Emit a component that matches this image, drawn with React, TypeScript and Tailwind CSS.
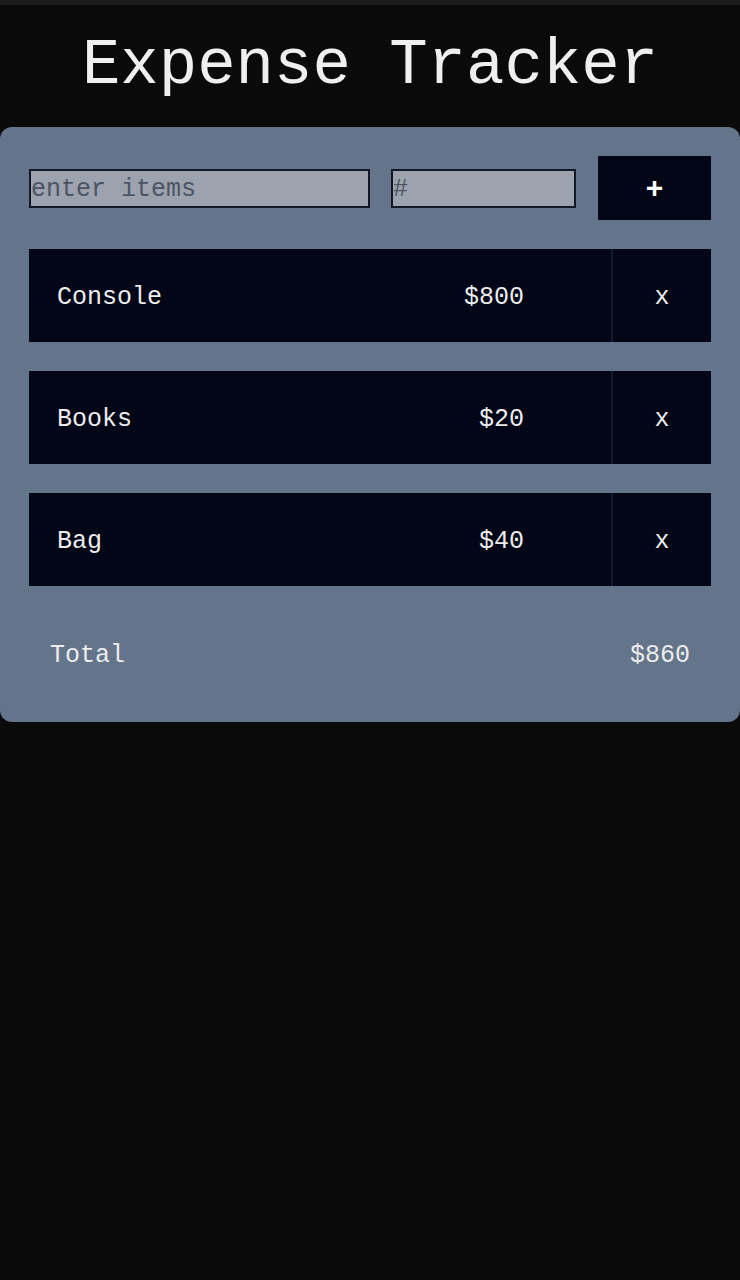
import React from 'react';

type Expense = { id: number; name: string; amount: number };

const items: Expense[] = [
  { id: 1, name: 'Console', amount: 800 },
  { id: 2, name: 'Books', amount: 20 },
  { id: 3, name: 'Bag', amount: 40 },
];

const mono = { fontFamily: '"Liberation Mono", "DejaVu Sans Mono", monospace' };

export default function App() {
  const total = items.reduce((sum, i) => sum + i.amount, 0);

  return (
    <div className="min-h-[1280px] w-full bg-[#0a0a0a] text-[#ececec]" style={mono}>
      <div className="h-[5px] bg-[#1c1c1c]" />
      <div className="flex h-[122px] items-center justify-center">
        <h1 className="text-[64px] leading-none text-[#efefef]">Expense Tracker</h1>
      </div>

      <div className="rounded-[12px] bg-[#64748b] px-[29px] pt-[29px]">
        <div className="flex items-center">
          <input
            placeholder="enter items"
            className="h-[39px] w-[341px] border-2 border-[#111827] bg-[#9ca3af] px-0 pt-[2px] text-[25px] text-[#1f2937] placeholder:text-[#4b5563] outline-none"
            style={mono}
          />
          <input
            placeholder="#"
            className="ml-[21px] h-[39px] w-[185px] border-2 border-[#111827] bg-[#9ca3af] px-0 pt-[2px] text-[25px] text-[#1f2937] placeholder:text-[#4b5563] outline-none"
            style={mono}
          />
          <button className="ml-auto flex h-[64px] w-[113px] items-center justify-center bg-[#020617] pt-[5px] text-[30px] font-bold text-white">
            +
          </button>
        </div>

        <ul className="mt-[29px] flex flex-col gap-[29px]">
          {items.map((item) => (
            <li key={item.id} className="flex h-[93px] bg-[#020617]">
              <div className="flex flex-1 items-center justify-between pl-[28px] pr-[87px] pt-[4px] text-[25px]">
                <span>{item.name}</span>
                <span>${item.amount}</span>
              </div>
              <div className="w-[2px] bg-[#111a2e]" />
              <button className="flex w-[98px] items-center justify-center pt-[4px] text-[25px] text-[#ececec]">x</button>
            </li>
          ))}
        </ul>

        <div className="flex h-[136px] items-center justify-between px-[21px] pt-[3px] text-[25px]">
          <span>Total</span>
          <span>${total}</span>
        </div>
      </div>
    </div>
  );
}
